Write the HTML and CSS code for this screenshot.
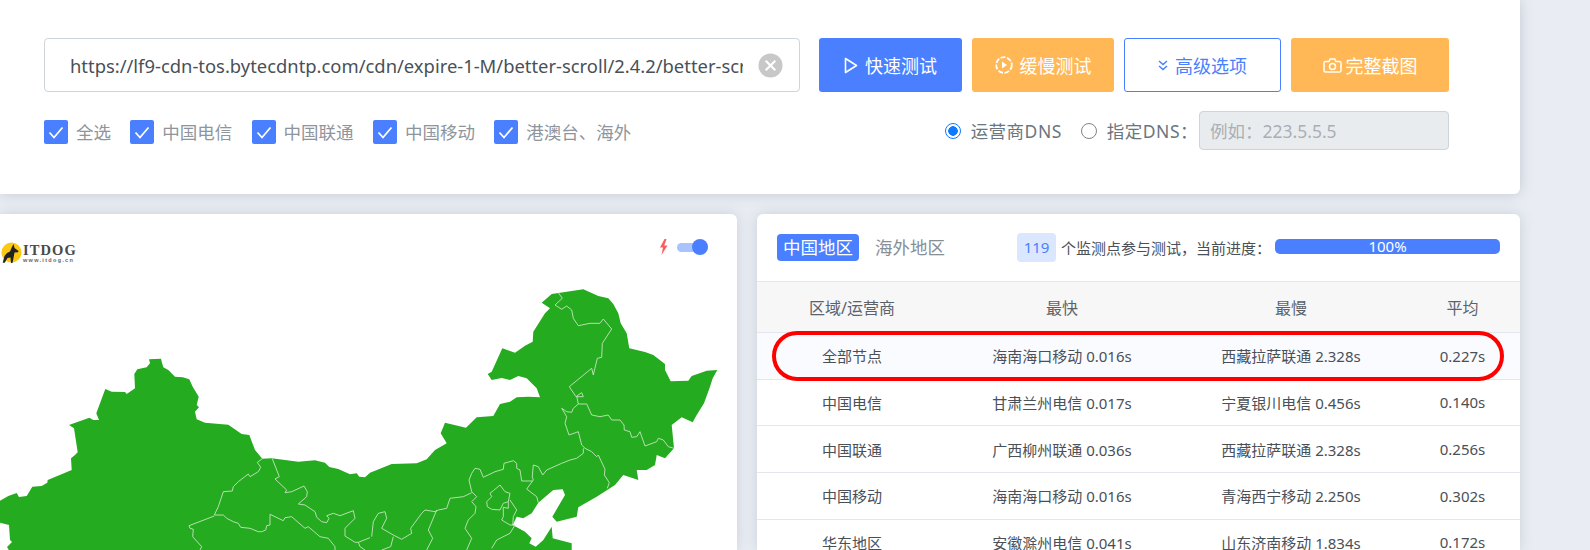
FILE: index.html
```html
<!DOCTYPE html>
<html lang="zh-CN">
<head>
  <meta charset="UTF-8" />
  <title>网站测速</title>
  <link rel="stylesheet" href="styles.css">
</head>
<body>
  <div class="page">
    <section class="search-panel">
      <div class="search-row">
        <div class="url-box">
          <input class="url-input" type="text" value="https://lf9-cdn-tos.bytecdntp.com/cdn/expire-1-M/better-scroll/2.4.2/better-scroll.min.js" />
          <svg class="url-clear" viewBox="0 0 26 26"><circle cx="13" cy="13" r="12.5" fill="#c8c8c8"/><path d="M8 8l10 10M18 8L8 18" stroke="#fff" stroke-width="2.200" fill="none"/></svg>
        </div>
        <div class="btn-group">
          <button class="btn btn-blue btn-fast">
            <svg viewBox="0 0 14 17" width="14" height="17"><path d="M1.500 1.500l11 7-11 7z" fill="none" stroke="#fff" stroke-width="1.600" stroke-linejoin="round"/></svg>
            快速测试
          </button>
          <button class="btn btn-orange btn-slow">
            <svg viewBox="0 0 18 18" width="18" height="18"><circle cx="9" cy="9" r="7.800" fill="none" stroke="#fff" stroke-width="1.800" stroke-dasharray="5 1.600"/><path d="M7 5.500l5 3.500-5 3.500z" fill="#fff"/></svg>
            缓慢测试
          </button>
          <button class="btn btn-outline btn-more">
            <svg viewBox="0 0 10 11" width="10" height="11"><path d="M1 1l4 3.500L9 1M1 6l4 3.500L9 6" fill="none" stroke="#4a80ff" stroke-width="1.500"/></svg>
            高级选项
          </button>
          <button class="btn btn-orange btn-shot">
            <svg viewBox="0 0 19 15" width="19" height="15"><path d="M2.500 3.500h3.500l1.200-2.500h4.600l1.200 2.500h3.500a1.500 1.500 0 0 1 1.500 1.500v7.500a1.500 1.500 0 0 1-1.500 1.500h-14a1.500 1.500 0 0 1-1.500-1.500v-7.500a1.500 1.500 0 0 1 1.500-1.500z" fill="none" stroke="#fff" stroke-width="1.500"/><circle cx="9.500" cy="8.500" r="3" fill="none" stroke="#fff" stroke-width="1.500"/></svg>
            完整截图
          </button>
        </div>
      </div>
      <div class="option-row">
        <div class="check-group">
          <label class="check-item"><svg class="check-box" viewBox="0 0 24 24"><rect width="24" height="24" rx="2" fill="#4a80ff"/><path d="M5.500 12.500l4.500 5 8.500-10" fill="none" stroke="#fff" stroke-width="1.800"/></svg>全选</label>
          <label class="check-item"><svg class="check-box" viewBox="0 0 24 24"><rect width="24" height="24" rx="2" fill="#4a80ff"/><path d="M5.500 12.500l4.500 5 8.500-10" fill="none" stroke="#fff" stroke-width="1.800"/></svg>中国电信</label>
          <label class="check-item"><svg class="check-box" viewBox="0 0 24 24"><rect width="24" height="24" rx="2" fill="#4a80ff"/><path d="M5.500 12.500l4.500 5 8.500-10" fill="none" stroke="#fff" stroke-width="1.800"/></svg>中国联通</label>
          <label class="check-item"><svg class="check-box" viewBox="0 0 24 24"><rect width="24" height="24" rx="2" fill="#4a80ff"/><path d="M5.500 12.500l4.500 5 8.500-10" fill="none" stroke="#fff" stroke-width="1.800"/></svg>中国移动</label>
          <label class="check-item"><svg class="check-box" viewBox="0 0 24 24"><rect width="24" height="24" rx="2" fill="#4a80ff"/><path d="M5.500 12.500l4.500 5 8.500-10" fill="none" stroke="#fff" stroke-width="1.800"/></svg>港澳台、海外</label>
        </div>
        <div class="dns-group">
          <label class="radio-item"><span class="radio radio-on"></span>运营商DNS</label>
          <label class="radio-item"><span class="radio"></span>指定DNS：</label>
          <input class="dns-input" type="text" placeholder="例如：223.5.5.5" disabled />
        </div>
      </div>
    </section>

    <div class="result-row">
      <section class="map-card">
        <svg class="map" viewBox="0 214 737 336">
          <path class="map-land" d="M0 500.700L8.300 496L16.700 493L19 497L26.700 496L32.300 486.700L41.700 486L47.300 482.700L47.700 480L71.700 470L71 458.300L75 455L77.700 452.300L74 428.300L69 425L89.300 417.700L93.300 420L99 420L96.300 413.300L105.300 389L111.700 391.700L125 392L126.700 394L135 388.300L134.300 374L137.300 369.300L146.700 367.300L150 363.300L149 359.300L161 358.700L161.700 361.700L163.300 367.300L168.300 370L175 376.700L182.700 377.300L189.300 379.300L192.700 386.700L198.700 396.700L196.700 405L199 407.300L195 411.700L196.700 419.300L205 422.700L228.300 424.700L241.700 434L249.300 435L255 450L262.300 458.700L271.700 458.300L298.300 461.700L315 460.300L325 462.700L329.300 467L338.300 469L350 474.300L356.700 473.300L359.300 476.700L365 477.300L370 472.700L391.700 464L416.700 463.300L426.700 459.300L435 450L446.700 443.300L440.700 433.300L445 422.700L466 427.700L476.700 417.300L493.300 416L500 404L510 401.700L516.700 397.300L528.300 396.700L540 397.300L536.700 388.300L526.700 378.300L518.300 376L510 380L501.700 378L491.700 380L487.700 374L491.700 371.700L502.300 348.300L515 352.700L525 345.700L532.700 341.700L533.300 331.700L545 313.300L550 308.300L541.700 302.700L551.700 294L583.300 289.300L598.300 296L608.300 298.300L613.300 304L618.300 313.300L620.700 323.300L626.700 333.300L629.300 348.300L645 352L653.300 355L665 364L665 370L670.700 381.300L688.300 380.700L691.700 376L706.700 370.700L717.300 370L712.700 378.300L710 386.700L704 403.300L696.700 415L692.700 422.300L681.700 417.300L671.700 425L674 448.300L665 458.300L656.700 455L655 465L646.700 470L636.700 470L638.300 480L623.300 475L615 485L596.700 496.700L578.300 507.300L576.700 516.700L556.700 521.700L552.300 516.700L565 495L562.700 489.300L553.300 490L538.300 502.700L531.700 513.300L523.300 518.300L516.700 516.700L512.700 525L525 531.700L531.700 538.300L529.300 543.300L535.700 546.700L543.300 540L551.700 526.700L552.700 538.300L571.700 543.300L571.700 552L10 552L7 547L12 542L10 540L9 525L0 522.700Z"/>
          <g class="map-borders">
            <path d="M262.300 458.700L257.300 462.300L260.700 467.300L258.300 471.700L250 476.700L248.300 474L238.300 481.700L233.300 486.700L232.300 491L223.300 491.700L218.300 506.700L214.300 515L223.300 515L226.700 518.300L233.300 521.700L238.300 523.300L240.700 527.300L250 528.300L258.300 531.700L261.700 531.700L265.700 530L266.700 525.700L270 525L270 514.300L283.300 520.700L285 517.700L291.700 516.700L305 528.300L308.300 526.700L320 536.700L328.300 538.300L335 546.700L335 550"/>
            <path d="M214.300 516L189 525.700L190 528.300L193.300 529.300L192.700 536.700L201.700 546.700L200 550"/>
            <path d="M272.300 458.700L279.300 476.700L275 479L286.700 490L285 492.700L291.700 491.700L304 486L307.300 491.700L306.700 496.700L298.300 504L305 505L315 511.700L316.700 517.300L321.700 521.700L326.700 522.700L329 518.300L326.700 515.700L333.300 513.300L340 515.700L353.300 510.700L355 518.300L345 528.300L345 536L355 542.300L358.300 542.300L370 537.700"/>
            <path d="M358.300 542.300L360 546.700L365 550"/>
            <path d="M558.300 292.700L562.300 298.300L555 305L561.700 309.300L566.700 306L571.700 310L573.300 318.300L578.300 325.700L590 323.300L600 323.300L603.300 319L611.700 329L602.300 343.300L601.700 357.300L597.300 358.300L593.300 375L591.700 368.300L569.300 386.700L576 396.700L583.300 396.700L581.700 392.700L576.700 396L578.300 404L586.700 404L591.700 415L600 416.700L608.300 415L611.700 420L620 420L624 425L624.300 430L630 431.700L631.700 437.300L636.700 436.700L640 431.700L645 446L656.700 441.700L658.300 438.300L663.300 440L668.300 446.700L674 448.300"/>
            <path d="M578.300 404L573.300 408.300L571.700 412.300L566.700 411.700L561.700 408.300L566.700 416.700L565 423.300L569 435L578.300 431.700L581.700 445L585 448.300L591.700 451.700L596.700 456.700L598.300 455L605 469.300L604.300 475L609.300 482.700L607.300 488.300"/>
            <path d="M583.300 448.300L583.300 453.300L576.700 458.300L570 460L561.700 463.300L546.700 470L542.700 475L538.300 466.700L533.300 465L532.300 476.700L533.300 480L526.700 489L536.700 496.700L538.300 502.700"/>
            <path d="M532.300 481L521.700 481L520 470L516.700 468.300L516.700 463.300L513.300 460.700L504 463.300L503.300 469.300L495 471.700L483.300 477.300L480 469.300L475 468.300L471.700 473.300L469 480L471.700 491.700L476.700 496.700L471.700 501.700L476 506.700L475 513.300L468.300 520L465 528.300L471.700 538.300L466.700 550"/>
            <path d="M471.700 492.700L463.300 496.700L450 498.300L446.700 508.300L438.300 510L435 511.700L425 510L421.700 513.300L410.700 528.300L411.700 533.300L401.700 539.300L393.300 535L381.700 528.300L386.700 518.300L385 511.700L378.300 513.300L373.300 521.700L371.700 536.700"/>
            <path d="M500 485L493.300 490.700L490 493.300L491.700 496.700L486.700 501.700L487.300 506.700L491.700 509.300L500 510L503.300 503.300L508.300 501.700L510 493.300L505 491.700L500 485Z"/>
            <path d="M508.300 501.700L508.300 508.300L503.300 507.300L503.300 516.700L501.700 520L510 525L515 525L510 533.300L496.700 540L491.700 548.300"/>
            <path d="M510 500L516.700 510L513.300 516.700L512.700 525"/>
            <path d="M436.700 510L428.300 530L432.700 538.300L426.700 550"/>
            <path d="M393.300 536.700L390.700 546.700L381.700 550"/>
          </g>
        </svg>
        <div class="map-head">
          <div class="logo">
            <svg class="logo-mark" viewBox="0 0 21 21"><circle cx="10.500" cy="10.500" r="10" fill="#fbc813"/><path d="M12.500 2l1 4 4 3-.5 1.200-3.500.4-.8 4.400-1.200 6h-1.500l-.5-5.500-3 .5-2.800 4.700H1.700L3.500 14l2.500-3 3-1.500 1.500-3.500z" fill="#222"/></svg>
            <div class="logo-text">
              <span class="logo-name">ITDOG</span>
              <span class="logo-url">www.itdog.cn</span>
            </div>
          </div>
          <div class="map-tools">
            <svg class="bolt" viewBox="0 0 9 16" width="9" height="16"><path d="M5.500 0L1 8.500h3L2.500 16 8.500 6.500h-3.200L7.500 0z" fill="#ff5a5f"/></svg>
            <span class="switch"><span class="switch-knob"></span></span>
          </div>
        </div>
      </section>

      <section class="table-card">
        <div class="table-head">
          <div class="tabs">
            <span class="tab tab-active">中国地区</span>
            <span class="tab">海外地区</span>
          </div>
          <span class="node-count">119</span>
          <span class="node-text">个监测点参与测试，当前进度：</span>
          <div class="progress"><div class="progress-bar" style="width:100%">100%</div></div>
        </div>
        <div class="table-wrap">
          <table class="speed-table">
            <colgroup><col class="col-a"><col class="col-b"><col class="col-c"><col class="col-d"></colgroup>
            <thead>
              <tr><th>区域/运营商</th><th>最快</th><th>最慢</th><th>平均</th></tr>
            </thead>
            <tbody>
              <tr class="row-all"><td>全部节点</td><td>海南海口移动 0.016s</td><td>西藏拉萨联通 2.328s</td><td>0.227s</td></tr>
              <tr><td>中国电信</td><td>甘肃兰州电信 0.017s</td><td>宁夏银川电信 0.456s</td><td>0.140s</td></tr>
              <tr><td>中国联通</td><td>广西柳州联通 0.036s</td><td>西藏拉萨联通 2.328s</td><td>0.256s</td></tr>
              <tr><td>中国移动</td><td>海南海口移动 0.016s</td><td>青海西宁移动 2.250s</td><td>0.302s</td></tr>
              <tr><td>华东地区</td><td>安徽滁州电信 0.041s</td><td>山东济南移动 1.834s</td><td>0.172s</td></tr>
            </tbody>
          </table>
          <div class="red-ring"></div>
        </div>
      </section>
    </div>
  </div>
</body>
</html>
```

FILE: styles.css
```css
* {
  margin: 0;
  padding: 0;
  box-sizing: border-box;
}

html, body {
  height: 550px;
  overflow: hidden;
}

body {
  font-family: "Noto Sans", "Noto Sans CJK SC", sans-serif;
  background-color: #e9edf3;
  color: #495057;
}

.page {
  width: 1520px;
}

.search-panel {
  height: 194px;
  padding: 38px 71px 0 44px;
  background: #fff;
  border-radius: 0 0 6px 0;
  box-shadow: 0 0 14px rgba(60, 75, 100, 0.22);
}

.search-row {
  display: flex;
  justify-content: space-between;
}

.url-box {
  position: relative;
  width: 756px;
}

.url-input {
  display: block;
  width: 100%;
  height: 54px;
  padding: 0 56px 0 25px;
  border: 1px solid #ced4da;
  border-radius: 4px;
  font-family: inherit;
  font-size: 18.400px;
  color: #495057;
  outline: none;
}

.url-clear {
  position: absolute;
  top: 15px;
  right: 17px;
  width: 25px;
  height: 25px;
}

.btn-group {
  display: flex;
  gap: 10px;
}

.btn {
  display: flex;
  align-items: center;
  justify-content: center;
  gap: 7px;
  height: 54px;
  border: none;
  border-radius: 3px;
  font-family: inherit;
  font-size: 18px;
  color: #fff;
}

.btn-blue { background: #4a80ff; }
.btn-orange { background: #ffb855; }

.btn-outline {
  background: #fff;
  border: 1px solid #4a80ff;
  color: #4a80ff;
}

.btn-fast { width: 143px; }
.btn-slow { width: 142px; }
.btn-more { width: 157px; }
.btn-shot { width: 158px; gap: 4px; }

.option-row {
  display: flex;
  justify-content: space-between;
  align-items: center;
  margin-top: 19px;
}

.check-group {
  display: flex;
  gap: 19.300px;
  padding-top: 3px;
}

.check-item {
  display: flex;
  align-items: center;
  gap: 8px;
  font-size: 17.500px;
  line-height: 24px;
  color: #8e959c;
}

.check-box {
  width: 24px;
  height: 24px;
}

.dns-group {
  display: flex;
  align-items: center;
}

.radio-item {
  display: flex;
  align-items: center;
  gap: 10px;
  margin-right: 19px;
  font-size: 17.500px;
  letter-spacing: 0.5px;
  color: #6c757d;
}

.radio-item:nth-child(2) { margin-right: 1px; }

.radio {
  width: 16px;
  height: 16px;
  border: 1px solid #7d848b;
  border-radius: 50%;
}

.radio-on {
  border-color: #0d7bff;
  background: radial-gradient(circle, #0d7bff 0 4.500px, #fff 5px);
}

.dns-input {
  width: 250px;
  height: 39px;
  padding: 0 10px;
  border: 1px solid #ced4da;
  border-radius: 4px;
  background: #e9ecef;
  font-family: inherit;
  font-size: 17.500px;
}

.dns-input::placeholder {
  color: #a9afb5;
  opacity: 1;
}

.result-row {
  display: grid;
  grid-template-columns: 737px 763px;
  gap: 20px;
  margin-top: 20px;
}

.map-card {
  position: relative;
  height: 336px;
  background: #fff;
  border-radius: 0 6px 0 0;
  box-shadow: 0 0 14px rgba(60, 75, 100, 0.18);
  overflow: hidden;
}

.map {
  position: absolute;
  inset: 0;
  width: 737px;
  height: 336px;
}

.map-land { fill: #25ab1f; }

.map-borders path {
  fill: none;
  stroke: #c4e4c0;
  stroke-width: 0.9;
}

.map-head {
  position: relative;
  display: flex;
  justify-content: space-between;
  padding: 28px 29px 0 1px;
}

.logo {
  display: flex;
  align-items: center;
  gap: 1px;
  height: 21px;
}

.logo-mark {
  width: 21px;
  height: 21px;
}

.logo-text {
  display: flex;
  flex-direction: column;
  margin-top: 2px;
}

.logo-name {
  font-family: "Liberation Serif", serif;
  font-size: 14.500px;
  font-weight: 700;
  line-height: 13px;
  letter-spacing: 1.100px;
  color: #4a4a4a;
}

.logo-url {
  font-family: "Liberation Sans", sans-serif;
  font-size: 5.500px;
  font-weight: 700;
  line-height: 6px;
  letter-spacing: 1.300px;
  color: #666;
}

.map-tools {
  display: flex;
  align-items: center;
  gap: 9px;
  height: 18px;
  margin-top: -4px;
}

.switch {
  position: relative;
  display: block;
  width: 31px;
  height: 9px;
  border-radius: 5px;
  background: #a9c3ff;
}

.switch-knob {
  position: absolute;
  top: -3.500px;
  right: 0;
  width: 16px;
  height: 16px;
  border-radius: 50%;
  background: #4a80ff;
}

.table-card {
  height: 336px;
  background: #fff;
  border-radius: 6px 6px 0 0;
  box-shadow: 0 0 14px rgba(60, 75, 100, 0.18);
  overflow: hidden;
}

.table-head {
  display: flex;
  align-items: center;
  height: 67px;
  padding: 0 20px;
}

.tabs {
  display: flex;
  gap: 10px;
  width: 240px;
}

.tab {
  padding: 0 6px;
  height: 27px;
  line-height: 27px;
  border-radius: 4px;
  font-size: 17.500px;
  color: #868e96;
}

.tab-active {
  background: #4a80ff;
  color: #fff;
}

.node-count {
  width: 39px;
  height: 29px;
  line-height: 29px;
  border-radius: 4px;
  background: #dbe6ff;
  color: #4a80ff;
  font-size: 15px;
  text-align: center;
}

.node-text {
  margin-left: 5px;
  width: 214px;
  font-size: 15px;
  color: #495057;
}

.progress {
  width: 225px;
  height: 15px;
  margin-top: -2px;
  border-radius: 5px;
  background: #e9ecef;
}

.progress-bar {
  height: 15px;
  line-height: 15px;
  border-radius: 5px;
  background: #4a80ff;
  color: #fff;
  font-size: 15px;
  text-align: center;
}

.table-wrap {
  position: relative;
}

.speed-table {
  width: 100%;
  table-layout: fixed;
  border-collapse: collapse;
  border-top: 1px solid #e3e7ed;
}

.col-a { width: 190px; }
.col-b { width: 230px; }
.col-c { width: 228px; }
.col-d { width: 115px; }

.speed-table th {
  height: 51px;
  background: #f7f7f7;
  font-size: 16px;
  font-weight: 400;
  color: #5a636b;
  border-bottom: 1px solid #e3e7ed;
}

.speed-table td {
  height: 46.670px;
  font-size: 15px;
  text-align: center;
  color: #495057;
  border-bottom: 1px solid #e3e7ed;
}

.row-all td { background: #fafbff; }

.red-ring {
  position: absolute;
  top: 50px;
  left: 15px;
  width: 732px;
  height: 50px;
  border: 4px solid #f00;
  border-radius: 25px;
}
```
